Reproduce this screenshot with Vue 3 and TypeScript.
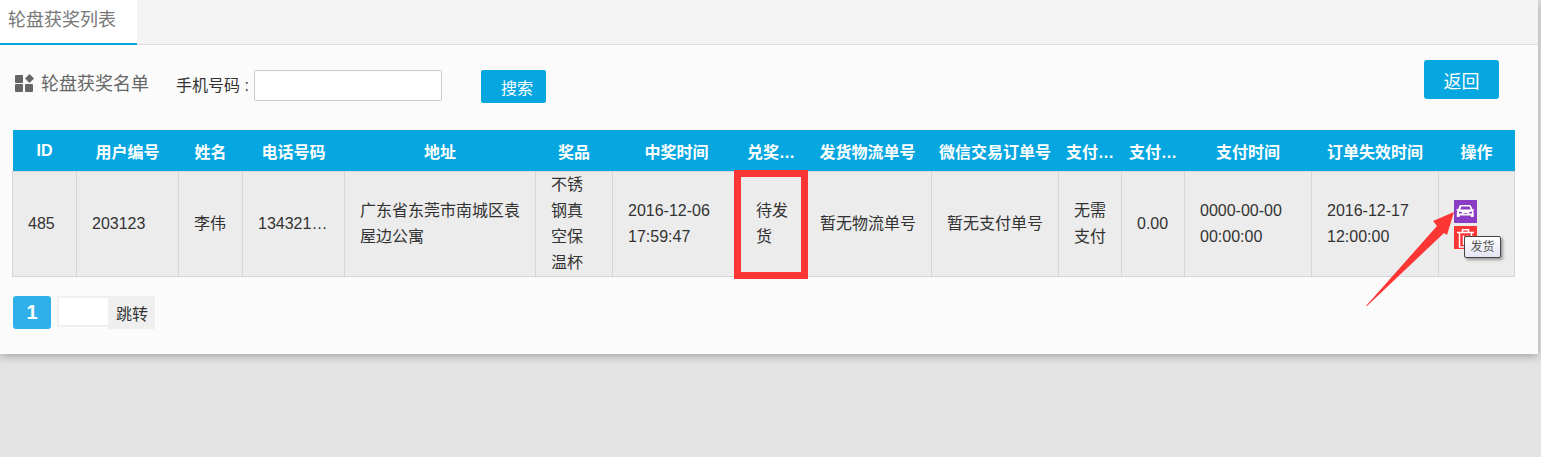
<script setup lang="ts">
interface Column {
  title: string;
  width: number;
  value?: string;
  cls?: string;
  headCls?: string;
}

const columns: Column[] = [
  { title: 'ID', width: 64, value: '485' },
  { title: '用户编号', width: 102, value: '203123' },
  { title: '姓名', width: 64, value: '李伟' },
  { title: '电话号码', width: 102, value: '134321…' },
  { title: '地址', width: 191, value: '广东省东莞市南城区袁屋边公寓' },
  { title: '奖品', width: 77, value: '不锈钢真空保温杯' },
  { title: '中奖时间', width: 122, value: '2016-12-06 17:59:47', headCls: 'push' },
  { title: '兑奖…', width: 73, value: '待发货', cls: 'status' },
  { title: '发货物流单号', width: 124, value: '暂无物流单号', cls: 'tight', headCls: 'pull' },
  { title: '微信交易订单号', width: 127, value: '暂无支付单号' },
  { title: '支付…', width: 63, value: '无需支付' },
  { title: '支付…', width: 63, value: '0.00' },
  { title: '支付时间', width: 127, value: '0000-00-00 00:00:00' },
  { title: '订单失效时间', width: 127, value: '2016-12-17 12:00:00' },
  { title: '操作', width: 76 },
];
</script>

<template>
  <div class="page">
    <div class="card">
      <div class="tabs">
        <div class="tab">轮盘获奖列表</div>
      </div>

      <div class="toolbar">
        <div class="title">
          <svg class="grid-icon" viewBox="0 0 19 18" width="19" height="18">
            <rect x="0" y="1" width="8" height="8" rx="1" />
            <rect x="0" y="10" width="8" height="8" rx="1" />
            <rect x="10" y="10" width="8" height="8" rx="1" />
            <path d="M14.5 0 L19 4.5 L14.5 9 L10 4.5 Z" />
          </svg>
          <span>轮盘获奖名单</span>
        </div>
        <label class="search-label">手机号码 :</label>
        <input class="search-input" type="text" />
        <button class="search-btn">搜索</button>
        <button class="back-btn">返回</button>
      </div>

      <table class="list">
        <colgroup>
          <col v-for="(col, i) in columns" :key="i" :style="{ width: col.width + 'px' }" />
        </colgroup>
        <thead>
          <tr>
            <th v-for="(col, i) in columns" :key="i" :class="col.headCls">{{ col.title }}</th>
          </tr>
        </thead>
        <tbody>
          <tr>
            <td v-for="(col, i) in columns" :key="i" :class="col.cls">
              <template v-if="col.value">{{ col.value }}</template>
              <div v-else class="ops">
                <span class="op purple">
                  <svg viewBox="0 0 23 23" width="23" height="23">
                    <path fill="#fff" d="M7.6 5 h7.8 c.9 0 1.5.4 1.8 1.2 l1.2 3.1 h1.2 c.4 0 .6.3.6.6 s-.3.7-.7.8 l-.8.1 c.7.6 1 1.2 1 2 v3.6 c0 .4-.3.7-.7.7 h-1.5 c-.4 0-.7-.3-.7-.7 v-.8 H5.7 v.8 c0 .4-.3.7-.7.7 H3.5 c-.4 0-.7-.3-.7-.7 v-3.6 c0-.8.3-1.4 1-2 l-.8-.1 c-.4-.1-.7-.4-.7-.8 s.2-.6.6-.6 h1.2 l1.2-3.1 c.3-.8.9-1.2 1.8-1.2 Z" />
                    <path fill="#8b3cc4" d="M7.8 6.5 h7.4 c.3 0 .5.1.6.4 l.9 2.6 H6.3 l.9-2.6 c.1-.3.3-.4.6-.4 Z M5 11.5 l3 .7 v1.2 H5 Z M18 11.5 l-3 .7 v1.2 h3 Z M9.5 13 h4 v.8 h-4 Z" />
                  </svg>
                </span>
                <span class="op red">
                  <svg viewBox="0 0 23 23" width="23" height="23" fill="none" stroke="#fff" stroke-width="1.5">
                    <path d="M3 6.5 H20" />
                    <path d="M8.5 6 V3.8 H14.5 V6" />
                    <path d="M5.5 7 V21 H17.5 V7" />
                    <path d="M9.5 9.5 V19 M13.5 9.5 V19" />
                  </svg>
                </span>
                <span class="tip">发货</span>
              </div>
            </td>
          </tr>
        </tbody>
      </table>

      <div class="pager">
        <button class="page-num">1</button>
        <input class="page-input" type="text" />
        <button class="page-go">跳转</button>
      </div>
    </div>

    <div class="red-box"></div>
    <svg class="arrow" viewBox="0 0 100 100" width="100" height="100">
      <polygon fill="#fc3535" points="89,3 68,12 72,17 1,97 2,97 79,24 82,26" />
    </svg>
  </div>
</template>

<style scoped>
.page {
  position: relative;
  width: 1541px;
  height: 457px;
  overflow: hidden;
  background: #e4e4e4;
  font-family: "Liberation Sans", "Noto Sans CJK SC", sans-serif;
  font-size: 16px;
  color: #333;
}

.card {
  width: 1538px;
  height: 354px;
  background: #fbfbfb;
  box-shadow: 0 2px 9px rgba(0, 0, 0, 0.3);
}

.tabs {
  height: 44px;
  background: #f4f4f4;
  border-bottom: 1px solid #ddd;
}

.tab {
  width: 137px;
  height: 45px;
  padding-left: 8px;
  box-sizing: border-box;
  background: #fff;
  border-bottom: 2px solid #06a7e1;
  font-size: 18px;
  line-height: 41px;
  color: #777;
}

.toolbar {
  display: flex;
  align-items: flex-start;
  height: 85px;
  padding-top: 15px;
  box-sizing: border-box;
}

.title {
  display: flex;
  align-items: center;
  gap: 7px;
  margin: 9px 0 0 15px;
  height: 26px;
  font-size: 18px;
  color: #666;
}

.grid-icon {
  fill: #666;
  margin-top: 2px;
}

.search-label {
  margin: 13px 0 0 27px;
  width: 78px;
  line-height: 26px;
  color: #333;
  white-space: nowrap;
}

.search-input {
  width: 188px;
  height: 31px;
  margin-top: 10px;
  box-sizing: border-box;
  border: 1px solid #ccc;
  border-radius: 2px;
  background: #fff;
  outline: none;
}

.search-btn {
  width: 65px;
  height: 33px;
  margin: 10px 0 0 39px;
  padding: 1px 13px 0 20px;
  border: none;
  border-radius: 2px;
  background: #06a7e1;
  color: #fff;
  font: inherit;
  white-space: nowrap;
}

.back-btn {
  width: 75px;
  height: 39px;
  margin-left: auto;
  margin-right: 39px;
  padding: 0;
  border: none;
  border-radius: 3px;
  background: #06a7e1;
  color: #fff;
  font: inherit;
  font-size: 18px;
}

.list {
  width: 1502px;
  margin-left: 12px;
  table-layout: fixed;
  border-collapse: collapse;
}

.list th {
  height: 41px;
  padding: 0;
  background: #06a7e1;
  color: #fff;
  font-weight: bold;
  text-align: center;
  white-space: nowrap;
}

.list th.push {
  padding-left: 6px;
}

.list th.pull {
  padding-right: 4px;
}

.list td {
  height: 104px;
  padding: 0 15px;
  background: #ececec;
  border: 1px solid #d6d6d6;
  line-height: 26px;
  color: #333;
}

.list td.tight {
  padding: 0 0 0 12px;
  white-space: nowrap;
}

.list td.status {
  padding: 0 15px 0 21px;
}

.ops {
  position: relative;
  display: flex;
  flex-direction: column;
  gap: 3px;
  width: 23px;
}

.op {
  display: block;
  width: 23px;
  height: 23px;
}

.op svg {
  display: block;
}

.purple {
  background: #8b3cc4;
}

.red {
  background: #fc3535;
}

.tip {
  position: absolute;
  top: 36px;
  left: 10px;
  width: 37px;
  height: 22px;
  box-sizing: border-box;
  border: 1px solid #444;
  border-radius: 2px;
  background: linear-gradient(#fff, #e4e4f4);
  box-shadow: 2px 2px 3px rgba(0, 0, 0, 0.35);
  font-size: 12px;
  line-height: 20px;
  text-align: center;
  color: #555;
}

.pager {
  display: flex;
  align-items: flex-start;
  margin: 19px 0 0 13px;
}

.page-num {
  width: 38px;
  height: 33px;
  margin-right: 6px;
  padding: 0;
  border: none;
  border-radius: 3px;
  background: #2fb0ea;
  color: #fff;
  font: inherit;
  font-size: 20px;
  font-weight: bold;
}

.page-input {
  width: 51px;
  height: 31px;
  box-sizing: border-box;
  border: 2px solid #f0f0f0;
  border-right: none;
  background: #fff;
  outline: none;
}

.page-go {
  width: 47px;
  height: 33px;
  padding: 0 0 0 1px;
  border: none;
  background: #efefef;
  color: #333;
  font: inherit;
}

.red-box {
  position: absolute;
  left: 734px;
  top: 170px;
  width: 74px;
  height: 109px;
  box-sizing: border-box;
  border: 7px solid #fc3535;
}

.arrow {
  position: absolute;
  left: 1365px;
  top: 209px;
}
</style>

<style>
html, body {
  margin: 0;
  background: #e4e4e4;
}
</style>
